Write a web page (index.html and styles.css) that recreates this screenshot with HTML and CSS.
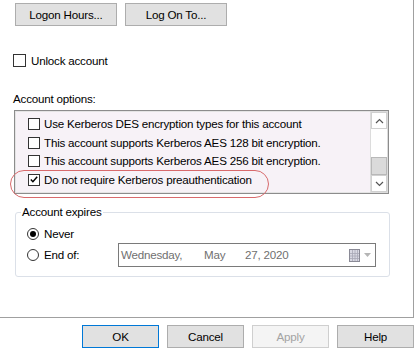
FILE: index.html
```html
<!DOCTYPE html>
<html>
<head>
<meta charset="utf-8">
<link rel="stylesheet" href="styles.css">
</head>
<body>
<div class="panel">
  <div class="btn-row">
    <button class="btn wide">Logon Hours...</button>
    <button class="btn wide">Log On To...</button>
  </div>

  <label class="check-row unlock"><span class="cb"></span><span>Unlock account</span></label>

  <div class="section-label">Account options:</div>

  <div class="listbox">
    <div class="list-items">
      <div class="item"><span class="cb"></span><span>Use Kerberos DES encryption types for this account</span></div>
      <div class="item"><span class="cb"></span><span>This account supports Kerberos AES 128 bit encryption.</span></div>
      <div class="item"><span class="cb"></span><span>This account supports Kerberos AES 256 bit encryption.</span></div>
      <div class="item"><span class="cb checked"><svg width="11" height="11" viewBox="0 0 11 11"><path d="M2 5.5 L4.3 8 L9 2.5" fill="none" stroke="#000" stroke-width="1.6"/></svg></span><span>Do not require Kerberos preauthentication</span></div>
    </div>
    <div class="scrollbar">
      <div class="sb-btn"><svg width="9" height="6" viewBox="0 0 9 6"><path d="M1 5 L4.5 1.5 L8 5" fill="none" stroke="#555" stroke-width="1.2"/></svg></div>
      <div class="sb-track"><div class="sb-thumb"></div></div>
      <div class="sb-btn"><svg width="9" height="6" viewBox="0 0 9 6"><path d="M1 1 L4.5 4.5 L8 1" fill="none" stroke="#555" stroke-width="1.2"/></svg></div>
    </div>
    <div class="highlight"></div>
  </div>

  <fieldset class="group">
    <legend>Account expires</legend>
    <div class="radio-row first"><span class="radio on"></span><span>Never</span></div>
    <div class="radio-row second">
      <span class="radio"></span><span class="endof">End of:</span>
      <div class="datebox">
        <span class="d-day">Wednesday,</span>
        <span class="d-month">May</span>
        <span class="d-date">27, 2020</span>
        <span class="d-icons">
          <svg width="12" height="13" viewBox="0 0 12 13"><rect x="0.5" y="0.5" width="10" height="12" fill="#d9d9e3" stroke="#8a8a96"/><path d="M1 4.5 H10 M1 7 H10 M1 9.5 H10 M3.5 1 V12 M6 1 V12 M8.5 1 V12" stroke="#a8a8b6" stroke-width="0.8"/></svg>
          <svg width="7" height="4" viewBox="0 0 7 4"><path d="M0 0 H7 L3.5 4 Z" fill="#b5b5b5"/></svg>
        </span>
      </div>
    </div>
  </fieldset>
</div>

<div class="footer">
  <button class="btn dlg default">OK</button>
  <button class="btn dlg">Cancel</button>
  <button class="btn dlg disabled">Apply</button>
  <button class="btn dlg">Help</button>
</div>
</body>
</html>
```

FILE: styles.css
```css
* { box-sizing: border-box; }
html, body { margin: 0; padding: 0; background: #fff; }
body {
  font-family: "Liberation Sans", Arial, sans-serif;
  font-size: 11.6px;
  letter-spacing: -0.2px;
  line-height: 14px;
  color: #000;
  width: 417px;
  height: 349px;
  overflow: hidden;
}
.panel {
  width: 414px;
  height: 318px;
  border-right: 1px solid #a0a0a0;
  border-bottom: 1px solid #a0a0a0;
  padding-top: 3px;
  display: flex;
  flex-direction: column;
}
.btn {
  font-family: inherit;
  font-size: 11.6px;
  letter-spacing: -0.2px;
  line-height: 14px;
  height: 23px;
  background: #e1e1e1;
  border: 1px solid #adadad;
  color: #000;
  padding: 0;
  margin: 0;
}
.btn-row {
  display: flex;
  gap: 8px;
  margin-left: 15px;
}
.btn.wide { width: 102px; }

.cb {
  display: inline-flex;
  align-items: center;
  justify-content: center;
  width: 13px;
  height: 13px;
  border: 1px solid #333;
  background: #fff;
  flex: none;
}
.check-row {
  display: flex;
  align-items: center;
  gap: 5px;
  margin-top: 28px;
  margin-left: 13px;
  height: 13px;
}
.section-label {
  margin-top: 25px;
  margin-left: 13px;
}
.listbox {
  position: relative;
  margin-top: 4px;
  margin-left: 14px;
  width: 375px;
  height: 84px;
  border: 1px solid #8c8c8c;
  display: flex;
  background: #f7f2f7;
}
.list-items {
  flex: 1;
  padding-top: 3px;
  padding-left: 12px;
  border: 1px solid #e4e4e4;
  border-right: none;
}
.item {
  display: flex;
  align-items: center;
  gap: 4px;
  height: 18.5px;
  white-space: nowrap;
}
.item .cb { width: 12px; height: 12px; }
.scrollbar {
  width: 18px;
  display: flex;
  flex-direction: column;
  background: #fff;
  border: 1px solid #dcdcdc;
}
.sb-btn {
  height: 17px;
  display: flex;
  align-items: center;
  justify-content: center;
  border: 1px solid #d0d0d0;
  background: #fff;
  flex: none;
}
.sb-track {
  flex: 1;
  display: flex;
  flex-direction: column;
  justify-content: flex-end;
}
.sb-thumb {
  height: 18px;
  background: #dadada;
  border: 1px solid #b8b8b8;
}
.highlight {
  position: absolute;
  left: -5px;
  top: 59px;
  width: 259px;
  height: 28px;
  border: 1.5px solid #d86a6c;
  border-radius: 14px;
  pointer-events: none;
}
.group {
  margin: 11px 0 0 15px;
  width: 375px;
  padding: 0 0 9px 0;
  border: 1px solid #dbe0e8;
  border-radius: 3px;
  min-width: 0;
}
.group legend {
  padding: 0 1px;
  margin-left: 5px;
  line-height: 14px;
}
.radio-row {
  display: flex;
  align-items: center;
  margin-left: 11px;
}
.radio-row.first { margin-top: 8px; height: 14px; }
.radio-row.second { margin-top: 2px; height: 24px; }
.radio {
  width: 12px;
  height: 12px;
  border-radius: 50%;
  border: 1px solid #333;
  background: #fff;
  margin-right: 5px;
  display: inline-flex;
  align-items: center;
  justify-content: center;
  flex: none;
}
.radio.on::after {
  content: "";
  width: 6px;
  height: 6px;
  border-radius: 50%;
  background: #000;
}
.endof { width: 74px; }
.datebox {
  width: 258px;
  height: 24px;
  border: 1px solid #7a7a7a;
  display: flex;
  align-items: center;
  color: #707070;
  padding-left: 2px;
  background: #fff;
}
.d-day { width: 83px; }
.d-month { width: 41px; }
.d-date { width: 104px; }
.d-icons {
  display: flex;
  align-items: center;
  gap: 3px;
}
.footer {
  display: flex;
  justify-content: flex-end;
  gap: 8px;
  margin-top: 7px;
  padding-right: 3px;
}
.btn.dlg { width: 77px; }
.btn.default { border-color: #0078d7; }
.btn.disabled { background: #f4f4f4; border-color: #cfcfcf; color: #a3a3a3; }
```
